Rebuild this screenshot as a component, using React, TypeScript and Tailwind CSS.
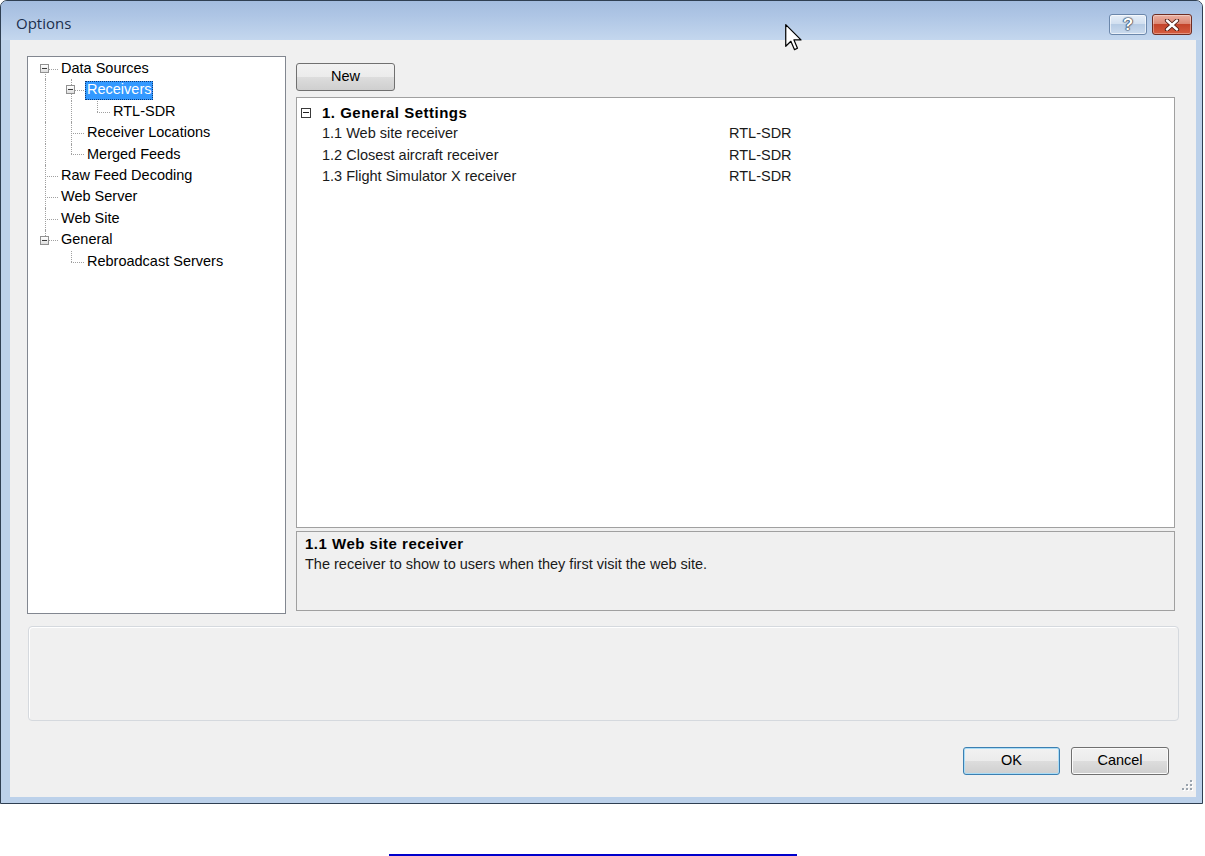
import React from "react";

type Cell = "pipe" | "tee" | "elbow" | "blank" | "first";

interface TreeRow {
  label: string;
  cells: Cell[];
  box?: boolean;
  selected?: boolean;
}

const treeRows: TreeRow[] = [
  { label: "Data Sources", cells: ["first"], box: true },
  { label: "Receivers", cells: ["pipe", "tee"], box: true, selected: true },
  { label: "RTL-SDR", cells: ["pipe", "pipe", "elbow"] },
  { label: "Receiver Locations", cells: ["pipe", "tee"] },
  { label: "Merged Feeds", cells: ["pipe", "elbow"] },
  { label: "Raw Feed Decoding", cells: ["tee"] },
  { label: "Web Server", cells: ["tee"] },
  { label: "Web Site", cells: ["tee"] },
  { label: "General", cells: ["elbow"], box: true },
  { label: "Rebroadcast Servers", cells: ["blank", "elbow"] },
];

const settings = [
  { name: "1.1 Web site receiver", value: "RTL-SDR" },
  { name: "1.2 Closest aircraft receiver", value: "RTL-SDR" },
  { name: "1.3 Flight Simulator X receiver", value: "RTL-SDR" },
];

const btn =
  "h-[28px] rounded-[3px] border text-[14.5px] text-black bg-[linear-gradient(to_bottom,#f2f2f2_0%,#ebebeb_50%,#dddddd_50%,#cfcfcf_100%)]";

function ExpandBox() {
  return (
    <div className="absolute left-[8px] top-[6px] w-[9px] h-[9px] border border-[#919191] bg-[linear-gradient(to_bottom,#ffffff,#dedede)]">
      <div className="absolute left-[1px] right-[1px] top-[3px] h-[1px] bg-[#3a3a3a]" />
    </div>
  );
}

function Connector({ kind, box }: { kind: Cell; box?: boolean }) {
  const line = "absolute border-[#a0a0a0] border-dotted";
  return (
    <div className="relative w-[26px] h-full shrink-0">
      {(kind === "pipe" || kind === "tee") && (
        <div className={`${line} left-[13px] top-0 bottom-0 border-l`} />
      )}
      {kind === "elbow" && <div className={`${line} left-[13px] top-0 h-1/2 border-l`} />}
      {kind === "first" && <div className={`${line} left-[13px] top-1/2 bottom-0 border-l`} />}
      {kind !== "pipe" && kind !== "blank" && (
        <div className={`${line} left-[13px] right-0 top-1/2 border-t`} />
      )}
      {box && <ExpandBox />}
    </div>
  );
}

function Tree() {
  return (
    <div className="w-[259px] h-[558px] shrink-0 border border-[#828790] bg-white pt-[1px] pl-[4px]">
      {treeRows.map((row) => (
        <div key={row.label} className="flex h-[21.44px] items-center">
          {row.cells.map((c, i) => (
            <Connector key={i} kind={c} box={row.box && i === row.cells.length - 1} />
          ))}
          <span
            className={
              row.selected
                ? "ml-[1px] flex h-[19px] items-center border border-dotted border-[#0c3a78] bg-[#3399ff] px-[1px] text-[14.5px] text-white"
                : "ml-[1px] px-[2px] text-[14.5px] text-black"
            }
          >
            {row.label}
          </span>
        </div>
      ))}
    </div>
  );
}

function PropertyGrid() {
  return (
    <div className="h-[431px] border border-[#a0a0a0] bg-white pt-[4px]">
      <div className="flex h-[21.5px] items-center">
        <div className="w-[25px] shrink-0 pl-[4px]">
          <div className="relative w-[10px] h-[10px] border border-[#3a3a3a] bg-white">
            <div className="absolute left-[1px] right-[1px] top-[3.5px] h-[1px] bg-[#222]" />
          </div>
        </div>
        <span className="text-[15px] font-bold tracking-[0.5px] text-black">1. General Settings</span>
      </div>
      {settings.map((s) => (
        <div key={s.name} className="flex h-[21.5px] items-center text-[14.5px] text-[#1a1a1a]">
          <div className="w-[432px] shrink-0 pl-[25px]">{s.name}</div>
          <div>{s.value}</div>
        </div>
      ))}
    </div>
  );
}

function HelpButton() {
  return (
    <div className="flex w-[38px] h-[21px] items-center justify-center rounded-[3px] border border-[#6b87ab] bg-[linear-gradient(to_bottom,#e6eef8_0%,#d2e0f0_45%,#b6cbe4_50%,#cbdbee_100%)] shadow-[inset_0_0_0_1px_rgba(255,255,255,0.6)]">
      <span className="text-[17px] leading-[17px] font-bold text-white [text-shadow:0_0_1px_#23344e,0_0_1px_#23344e,0_0_2px_#23344e,0_0_1px_#23344e]">
        ?
      </span>
    </div>
  );
}

function CloseButton() {
  return (
    <div className="flex w-[40px] h-[21px] items-center justify-center rounded-[3px] border border-[#6e2d22] bg-[linear-gradient(to_bottom,#eab0a2_0%,#dc8874_45%,#c4442a_50%,#d65c3f_100%)] shadow-[inset_0_0_0_1px_rgba(255,255,255,0.35)]">
      <svg width="16" height="12" viewBox="0 0 16 12">
        <path d="M3 1.5 L13 10.5 M13 1.5 L3 10.5" stroke="#4a1b12" strokeWidth="4.2" strokeLinecap="round" />
        <path d="M3 1.5 L13 10.5 M13 1.5 L3 10.5" stroke="#ffffff" strokeWidth="2.4" strokeLinecap="round" />
      </svg>
    </div>
  );
}

function SizeGrip() {
  const dots = [
    [9, 1],
    [9, 5],
    [5, 5],
    [9, 9],
    [5, 9],
    [1, 9],
  ];
  return (
    <svg className="absolute right-[3px] bottom-[6px]" width="12" height="12" viewBox="0 0 12 12">
      {dots.map(([x, y], i) => (
        <g key={i}>
          <rect x={x + 1} y={y + 1} width="2" height="2" fill="#ffffff" />
          <rect x={x} y={y} width="2" height="2" fill="#9aa3ad" />
        </g>
      ))}
    </svg>
  );
}

function Cursor() {
  return (
    <svg className="absolute left-[785px] top-[24px]" width="17" height="27" viewBox="0 0 12.5 20">
      <path
        d="M0.5 0.5 L0.5 16.5 L4.3 12.8 L7 19 L9.2 18 L6.6 11.8 L11.8 11.8 Z"
        fill="#ffffff"
        stroke="#000000"
        strokeWidth="0.9"
        strokeLinejoin="round"
      />
    </svg>
  );
}

export default function App() {
  return (
    <div className="relative w-[1205px] h-[856px] overflow-hidden bg-white font-['Liberation_Sans',Arial,sans-serif]">
      <div className="flex w-[1203px] h-[804px] flex-col rounded-t-[7px] border border-[#2f3f52] bg-[#bcd1ea]">
        {/* title bar */}
        <div className="flex h-[39px] shrink-0 items-start justify-between rounded-t-[6px] bg-[linear-gradient(to_bottom,#a3bcdf_0%,#afc6e5_40%,#c4d7ee_100%)] pl-[15px] pr-[10px]">
          <span className="pt-[12px] font-['Open_Sans',sans-serif] text-[15px] leading-[20px] text-[#1b2f4d]">
            Options
          </span>
          <div className="flex gap-[5px] pt-[13px]">
            <HelpButton />
            <CloseButton />
          </div>
        </div>

        {/* client area */}
        <div className="relative ml-[9px] mr-[6px] mb-[6px] flex flex-1 flex-col bg-[#f0f0f0] pl-[17px] pt-[16px]">
          <div className="flex gap-[10px]">
            <Tree />
            <div className="flex w-[879px] flex-col pt-[7px]">
              <button className={`${btn} w-[99px] border-[#707070]`}>New</button>
              <div className="mt-[6px]">
                <PropertyGrid />
              </div>
              <div className="mt-[3px] h-[80px] border border-[#a0a0a0] bg-[#f0f0f0] pl-[8px] pt-[2px]">
                <div className="text-[15px] font-bold leading-[20px] tracking-[0.5px] text-black">
                  1.1 Web site receiver
                </div>
                <div className="text-[14.5px] leading-[20px] text-[#1a1a1a]">
                  The receiver to show to users when they first visit the web site.
                </div>
              </div>
            </div>
          </div>

          <div className="ml-[1px] mt-[12px] h-[95px] w-[1151px] rounded-[4px] border border-[#d5d9de] bg-[#f0f0f0] shadow-[inset_1px_1px_0_#ffffff]" />

          <div className="mt-[26px] flex justify-end gap-[11px] pr-[27px]">
            <button
              className={`${btn} w-[97px] border-[#3c7fb1] shadow-[inset_0_0_0_1px_#a9dcf6]`}
            >
              OK
            </button>
            <button className={`${btn} w-[98px] border-[#707070] shadow-[inset_0_0_0_1px_#fbfbfb]`}>
              Cancel
            </button>
          </div>

          <SizeGrip />
        </div>
      </div>

      <div className="ml-[389px] mt-[50px] h-[2px] w-[408px] bg-[#0000cc]" />

      <Cursor />
    </div>
  );
}
